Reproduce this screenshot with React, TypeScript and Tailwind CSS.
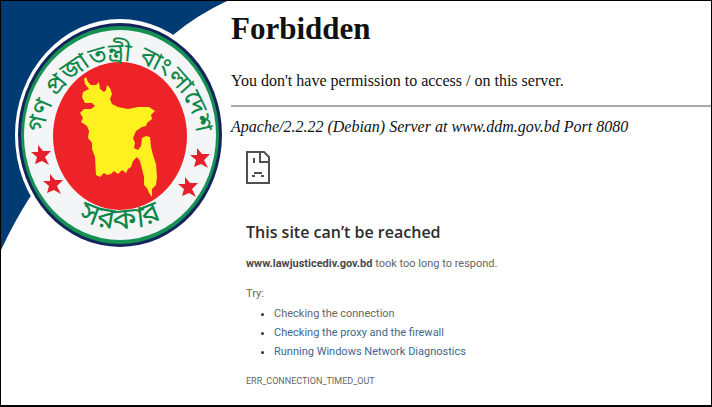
const SUGGESTIONS = [
  { label: 'Checking the connection' },
  { label: 'Checking the proxy and the firewall', href: '#proxy' },
  { label: 'Running Windows Network Diagnostics', href: '#diagnostics' },
];

const STARS = [
  { x: 40, y: 154 },
  { x: 52, y: 183 },
  { x: 199, y: 157 },
  { x: 187, y: 186 },
];

const SEAL_FONT = "'Noto Sans Bengali', 'Noto Sans', sans-serif";

function GovernmentSeal() {
  return (
    <svg viewBox="0 0 226 250" className="block w-full" role="img" aria-label="Government seal of Bangladesh">
      <path d="M0 0H226Q196 14 172 34L29 196Q13 221 0 249Z" fill="#003b73" />
      <ellipse cx="119" cy="134" rx="105" ry="116" fill="#fff" />
      <ellipse cx="119" cy="134" rx="102" ry="112" fill="#14245c" />
      <ellipse cx="119" cy="134" rx="99" ry="109" fill="#159154" />
      <ellipse cx="119" cy="134" rx="96" ry="105" fill="#f3f5f6" />
      <ellipse cx="119" cy="135" rx="67" ry="74" fill="#ed2328" />
      <path
        d="M85 76L87 81 90 84 95 84 98 81 99 88 103 91 105 89 106 84 109 87 111 93 109 98 111 103 117 106 127 108 137 106 148 106 154 110 150 114 151 118 146 122 145 125 141 126 135 130 132 137 134 142 133 147 137 149 140 145 141 137 145 135 149 136 150 146 152 154 155 163 156 176 155 184 151 188 151 196 148 192 146 187 143 184 143 176 141 168 139 160 136 156 132 160 130 166 127 168 125 172 121 169 117 173 113 170 110 173 106 174 103 172 99 176 95 174 94 156 91 148 91 142 87 137 88 130 86 125 80 121 82 117 79 112 83 108 90 108 94 105 91 102 84 102 81 96 82 91 88 88 84 83 83 78Z"
        fill="#fff01f"
      />
      {STARS.map((star) => (
        <path
          key={`${star.x}-${star.y}`}
          transform={`translate(${star.x} ${star.y})`}
          d="M-3-10L2-4 10-4 4 2 8 10 1 6-6 9-4 2-10-3-3-3Z"
          fill="#e3202c"
        />
      ))}
      <path id="seal-top" d="M44 164A77 85 0 1 1 194 164" fill="none" />
      <path id="seal-bottom" d="M46 192A94 97 0 0 0 192 192" fill="none" />
      <g fill="#0d8749" fontFamily={SEAL_FONT} textAnchor="middle">
        <text fontSize="25">
          <textPath href="#seal-top" startOffset="50%">গণ প্রজাতন্ত্রী বাংলাদেশ</textPath>
        </text>
        <text fontSize="30">
          <textPath href="#seal-bottom" startOffset="50%">সরকার</textPath>
        </text>
      </g>
    </svg>
  );
}

function SadPageIcon() {
  return (
    <svg viewBox="0 0 24 33" className="block h-[33px] w-6" fill="none" stroke="#505050" strokeWidth="2" aria-hidden="true">
      <path d="M1 1H18L23 6V32H1Z" />
      <path d="M14 1V11H23" />
      <path d="M8 7V12M6 25H9M8 22H16M15 25H18" />
    </svg>
  );
}

function ForbiddenMessage() {
  return (
    <section className="font-['Liberation_Serif',serif] text-[#111]">
      <h1 className="pt-2.5 text-[31px] leading-9 font-bold">Forbidden</h1>
      <p className="mt-5.5 text-base leading-6">You don't have permission to access / on this server.</p>
      <hr className="mt-3 border-t-2 border-[#aaa]" />
      <address className="mt-2 text-base leading-6">Apache/2.2.22 (Debian) Server at www.ddm.gov.bd Port 8080</address>
    </section>
  );
}

function UnreachableMessage() {
  return (
    <section className="mt-3 pl-[15px] font-['Roboto',sans-serif] text-[11px] text-[#666]">
      <SadPageIcon />
      <h2 className="mt-9 font-['Open_Sans',sans-serif] text-base leading-6 font-semibold text-[#2c2c2c]">
        This site can’t be reached
      </h2>
      <p className="mt-2.5 leading-5">
        <strong className="font-bold text-[#4a4a4a]">www.lawjusticediv.gov.bd</strong> took too long to respond.
      </p>
      <p className="mt-2.5 leading-5">Try:</p>
      <ul className="list-disc pl-7 leading-[19px] marker:text-[#333]">
        {SUGGESTIONS.map((item) => (
          <li key={item.label}>
            {item.href ? (
              <a href={item.href} className="text-[#41678e]">{item.label}</a>
            ) : (
              item.label
            )}
          </li>
        ))}
      </ul>
      <p className="mt-3 text-[9px] leading-4">ERR_CONNECTION_TIMED_OUT</p>
    </section>
  );
}

export default function App() {
  return (
    <main className="flex min-h-screen items-start border border-b-2 border-black bg-white">
      <aside className="w-[226px] shrink-0">
        <GovernmentSeal />
      </aside>
      <div className="min-w-0 flex-1 pl-1">
        <ForbiddenMessage />
        <UnreachableMessage />
      </div>
    </main>
  );
}
